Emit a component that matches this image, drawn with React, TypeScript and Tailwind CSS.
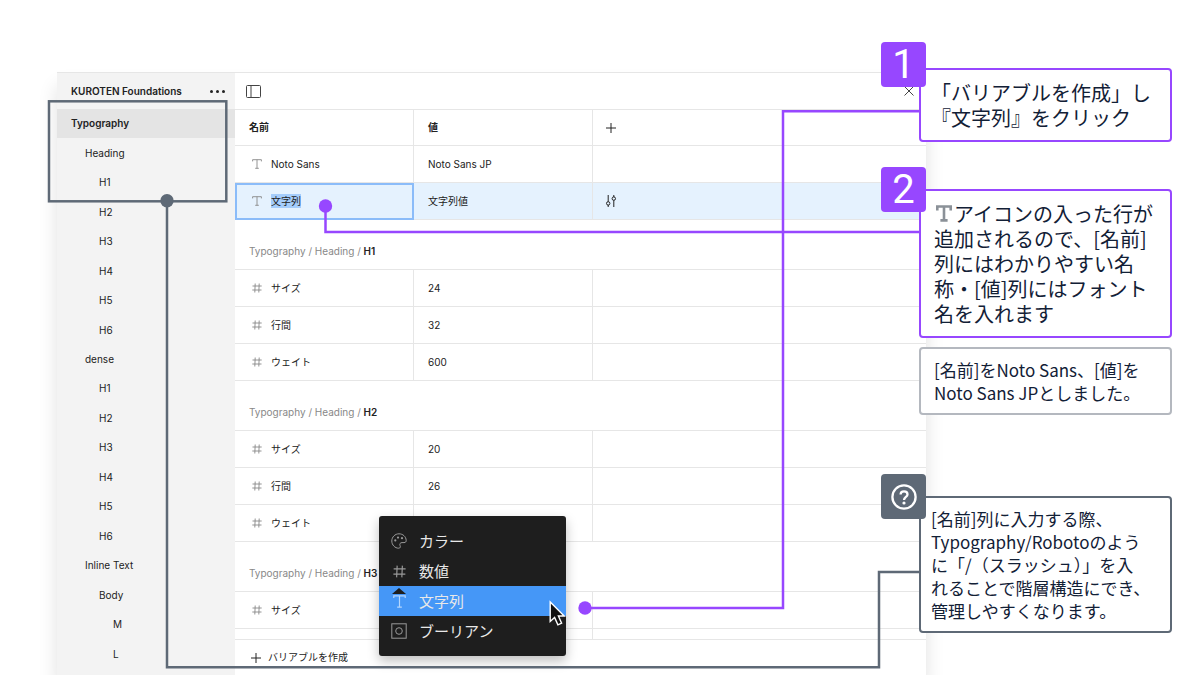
import type { ReactNode } from 'react';

type IconProps = { className?: string };

const TextIcon = ({ className = 'size-[10px]' }: IconProps) => (
  <svg viewBox="0 0 10 10" fill="none" stroke="currentColor" strokeWidth="0.9" className={className}>
    <path d="M0.6 2.4V0.7H9.4V2.4M5 0.7V9.3M3.2 9.3H6.8" />
  </svg>
);

const HashIcon = ({ className = 'size-[10px]' }: IconProps) => (
  <svg viewBox="0 0 10 10" fill="none" stroke="currentColor" strokeWidth="0.9" className={className}>
    <path d="M3.2 0.5L2.8 9.5M7.2 0.5L6.8 9.5M0.5 3H9.7M0.3 7H9.5" />
  </svg>
);

const PaletteIcon = () => (
  <svg viewBox="0 0 16 16" fill="none" stroke="currentColor" strokeWidth="1" className="size-4">
    <path d="M8 0.8C4 0.8 0.8 4 0.8 8S4 15.2 7.6 15.2C9.6 15.2 9.6 13.6 9 12.4C8.4 11 9.2 9.6 11 9.6H13C14.6 9.6 15.2 8.8 15.2 7.4C15 3.6 11.9 0.8 8 0.8Z" />
    <g fill="currentColor" stroke="none">
      <circle cx="4.3" cy="7.4" r="1.1" />
      <circle cx="7" cy="4.6" r="1.1" />
      <circle cx="11" cy="5.2" r="1.1" />
    </g>
  </svg>
);

const BooleanIcon = () => (
  <svg viewBox="0 0 16 16" fill="none" stroke="currentColor" strokeWidth="1" className="size-4">
    <rect x="0.8" y="0.8" width="14.4" height="14.4" />
    <circle cx="8" cy="8" r="3.3" />
  </svg>
);

const PlusIcon = ({ className = 'size-[10px]' }: IconProps) => (
  <svg viewBox="0 0 10 10" fill="none" stroke="currentColor" strokeWidth="1" className={className}>
    <path d="M5 0V10M0 5H10" />
  </svg>
);

const SlidersIcon = () => (
  <svg viewBox="0 0 12 12" fill="none" stroke="currentColor" strokeWidth="1" className="size-3">
    <path d="M3.2 0V6.7M3.2 10V12M8.8 0V2M8.8 5.3V12" />
    <circle cx="3.2" cy="8.4" r="1.7" />
    <circle cx="8.8" cy="3.6" r="1.7" />
  </svg>
);

const navItems = [
  { label: 'Typography', level: 0 },
  { label: 'Heading', level: 1 },
  { label: 'H1', level: 2 },
  { label: 'H2', level: 2 },
  { label: 'H3', level: 2 },
  { label: 'H4', level: 2 },
  { label: 'H5', level: 2 },
  { label: 'H6', level: 2 },
  { label: 'dense', level: 1 },
  { label: 'H1', level: 2 },
  { label: 'H2', level: 2 },
  { label: 'H3', level: 2 },
  { label: 'H4', level: 2 },
  { label: 'H5', level: 2 },
  { label: 'H6', level: 2 },
  { label: 'Inline Text', level: 1 },
  { label: 'Body', level: 2 },
  { label: 'M', level: 3 },
  { label: 'L', level: 3 },
];

const levelStyles = [
  'pl-[14px] bg-[#e4e4e4] font-semibold',
  'pl-[28px]',
  'pl-[42px]',
  'pl-[56px]',
];

const groups = [
  { name: 'H1', rows: [['サイズ', '24'], ['行間', '32'], ['ウェイト', '600']] },
  { name: 'H2', rows: [['サイズ', '20'], ['行間', '26'], ['ウェイト', '']] },
  { name: 'H3', rows: [['サイズ', ''], ['', '']] },
];

const menuItems = [
  { label: 'カラー', icon: <PaletteIcon /> },
  { label: '数値', icon: <HashIcon className="size-[13px]" /> },
  { label: '文字列', icon: <TextIcon className="size-[13px]" />, active: true },
  { label: 'ブーリアン', icon: <BooleanIcon /> },
];

function Sidebar() {
  return (
    <nav className="flex w-[178px] shrink-0 flex-col bg-[#f3f3f3] pb-[6px]">
      <div className="flex h-[36px] shrink-0 items-center justify-between pl-[14px] pr-[10px]">
        <h1 className="font-semibold">KUROTEN Foundations</h1>
        <button type="button" aria-label="More" className="flex gap-[3px]">
          <span className="size-[3px] rounded-full bg-[#222]" />
          <span className="size-[3px] rounded-full bg-[#222]" />
          <span className="size-[3px] rounded-full bg-[#222]" />
        </button>
      </div>
      <ul className="flex flex-1 flex-col">
        {navItems.map((item, i) => (
          <li key={i} className="flex flex-1">
            <a href="#" className={`flex flex-1 items-center ${levelStyles[item.level]}`}>
              {item.label}
            </a>
          </li>
        ))}
      </ul>
    </nav>
  );
}

function Row({ icon, name, value, action, selected }: {
  icon: ReactNode;
  name: ReactNode;
  value: string;
  action?: ReactNode;
  selected?: boolean;
}) {
  return (
    <tr className={selected ? 'bg-[#e5f2fe]' : ''}>
      <td className={`h-[37px] border-b border-r border-[#e6e6e6] pl-[17px] ${selected ? 'outline-2 -outline-offset-2 outline-[#8bbcf9]' : ''}`}>
        <div className="flex items-center gap-[9px]">
          <span className="text-[#888]">{icon}</span>
          {name}
        </div>
      </td>
      <td className="border-b border-r border-[#e6e6e6] pl-[14px]">{value}</td>
      <td className="border-b border-[#e6e6e6] pl-3">{action}</td>
    </tr>
  );
}

function VariablesTable() {
  return (
    <table className="w-full table-fixed border-separate border-spacing-0 text-left">
      <colgroup>
        <col className="w-[179px]" />
        <col className="w-[179px]" />
        <col />
      </colgroup>
      <thead>
        <tr>
          <th className="h-[36px] border-b border-r border-[#e6e6e6] pl-[14px] font-bold">名前</th>
          <th className="border-b border-r border-[#e6e6e6] pl-[14px] font-bold">値</th>
          <th className="border-b border-[#e6e6e6] pl-[13px]">
            <button type="button" aria-label="Add mode" className="block">
              <PlusIcon />
            </button>
          </th>
        </tr>
      </thead>
      <tbody>
        <Row icon={<TextIcon />} name="Noto Sans" value="Noto Sans JP" />
        <Row
          selected
          icon={<TextIcon />}
          name={<input aria-label="名前" defaultValue="文字列" className="h-[14px] w-[30px] bg-[#a5cdfb]" />}
          value="文字列値"
          action={
            <button type="button" aria-label="Edit" className="block">
              <SlidersIcon />
            </button>
          }
        />
      </tbody>
      {groups.map((group) => (
        <tbody key={group.name}>
          <tr>
            <th colSpan={3} className="h-[50px] border-b border-[#e6e6e6] pb-[10px] pl-[14px] align-bottom font-normal text-[#888]">
              Typography / Heading / <span className="font-semibold text-[#222]">{group.name}</span>
            </th>
          </tr>
          {group.rows.map(([name, value]) => (
            <Row key={name} icon={<HashIcon />} name={name} value={value} />
          ))}
        </tbody>
      ))}
    </table>
  );
}

function TypeMenu() {
  return (
    <div
      role="menu"
      className="absolute left-[322px] top-[443px] w-[187px] rounded-[3px] bg-[#1e1e1e] py-[10px] text-[15px] text-[#e8e8e8] shadow-[0_5px_12px_rgba(0,0,0,0.25)]"
    >
      {menuItems.map((item) => (
        <button
          key={item.label}
          type="button"
          role="menuitem"
          className={`relative flex h-[30px] w-full items-center gap-3 pl-3 ${item.active ? 'bg-[#4597f7]' : ''}`}
        >
          {item.active && (
            <svg viewBox="0 0 14 6" className="absolute left-[13px] top-[2px] h-[6px] w-[14px]">
              <path d="M7 0L14 6H0Z" fill="#1e1e1e" />
            </svg>
          )}
          <span className={`flex w-4 justify-center ${item.active ? 'text-[#b5d6fd]' : 'text-[#999]'}`}>{item.icon}</span>
          {item.label}
        </button>
      ))}
      <svg viewBox="0 0 17 26" className="absolute left-[170px] top-[84px] h-[26px] w-[17px]">
        <path d="M1.2 2V21.5L5.6 17.4L8.9 24.8L12.6 23.2L9.4 16H15.2Z" fill="#111" stroke="#fff" strokeWidth="1.4" />
      </svg>
    </div>
  );
}

function VariablesWindow() {
  return (
    <section className="relative ml-[57px] mt-[72px] flex min-w-0 flex-1 border-t border-[#e6e6e6] bg-white text-[10px] leading-[15px] text-[#222] shadow-[0_14px_18px_rgba(0,0,0,0.12)]">
      <Sidebar />
      <div className="flex min-w-0 flex-1 flex-col">
        <header className="flex h-[37px] shrink-0 items-center justify-between border-b border-[#e6e6e6] pl-[11px] pr-3">
          <button type="button" aria-label="Toggle sidebar">
            <svg viewBox="0 0 15 13" fill="none" stroke="#444" className="h-[13px] w-[15px]">
              <rect x="0.5" y="0.5" width="14" height="12" rx="1" />
              <path d="M5 0.5V12.5" />
            </svg>
          </button>
          <button type="button" aria-label="Close">
            <svg viewBox="0 0 10 10" fill="none" stroke="#444" className="size-[10px]">
              <path d="M0.5 0.5L9.5 9.5M9.5 0.5L0.5 9.5" />
            </svg>
          </button>
        </header>
        <div className="h-0 flex-1 overflow-hidden">
          <VariablesTable />
        </div>
        <footer className="flex h-[36px] shrink-0 border-t border-[#e6e6e6] pl-4">
          <button type="button" className="flex items-center gap-[7px]">
            <PlusIcon />
            バリアブルを作成
          </button>
        </footer>
      </div>
      <TypeMenu />
    </section>
  );
}

function Connectors() {
  return (
    <svg className="pointer-events-none absolute left-0 top-0 h-[675px] w-[1200px]" fill="none" strokeWidth="2.5">
      <g stroke="#9747ff">
        <path d="M585 608H783V111.2H921" />
        <path d="M325.5 206V232H921" />
      </g>
      <g fill="#9747ff">
        <circle cx="585" cy="608" r="6.7" />
        <circle cx="325.5" cy="206" r="6.7" />
      </g>
      <g stroke="#5e6976">
        <rect x="49" y="101.3" width="177.3" height="100" />
        <path d="M167 201V667.3H879V572H921" />
      </g>
      <circle cx="167" cy="200.7" r="6.7" fill="#5e6976" />
    </svg>
  );
}

function Callout({ className, badge, children }: { className: string; badge?: ReactNode; children: ReactNode }) {
  return (
    <div className={`relative whitespace-nowrap rounded-[4px] border-2 bg-white ${className}`}>
      {badge}
      <p>{children}</p>
    </div>
  );
}

const badgeStyle = 'absolute -left-10 flex size-[45px] items-center justify-center rounded-[4px] text-white';

export default function App() {
  return (
    <main className="relative flex h-screen min-h-[675px] overflow-hidden bg-white font-['Inter','Noto_Sans_CJK_JP',sans-serif]">
      <VariablesWindow />
      <Connectors />
      <aside className="relative -ml-[7px] mr-7 w-[253px] shrink-0 pt-[68px] font-['Noto_Sans_CJK_JP',sans-serif] text-[#122036]">
        <Callout
          className="border-[#9747ff] px-[10px] py-[10px] text-[20px] leading-[25px]"
          badge={<span className={`${badgeStyle} -top-7 bg-[#9747ff] font-[Roboto,sans-serif] text-[40px]`}>1</span>}
        >
          「バリアブルを作成」し
          <br />
          『文字列』をクリック
        </Callout>
        <Callout
          className="mt-[47px] border-[#9747ff] px-[13px] py-[10px] text-[20px] leading-[25px]"
          badge={<span className={`${badgeStyle} -top-6 bg-[#9747ff] font-[Roboto,sans-serif] text-[40px]`}>2</span>}
        >
          <svg viewBox="0 0 16 17" fill="none" stroke="#8b9198" strokeWidth="2.6" className="mx-[2px] inline-block h-[17px] w-4 align-baseline">
            <path d="M1.3 5.4V1.5H14.7V5.4M8 1.5V15.4M4.4 15.4H11.6" />
          </svg>
          アイコンの入った行が
          <br />
          追加されるので、[名前]
          <br />
          列にはわかりやすい名
          <br />
          称・[値]列にはフォント
          <br />
          名を入れます
        </Callout>
        <Callout className="mt-[9px] border-[#b4b8bf] px-[13px] py-[9px] text-[17px] leading-[23px]">
          [名前]をNoto Sans、[値]を
          <br />
          Noto Sans JPとしました。
        </Callout>
        <Callout
          className="mt-[81px] border-[#5e6976] px-[10px] py-[9px] text-[17px] leading-[23px]"
          badge={
            <span className={`${badgeStyle} -top-6 bg-[#5e6976]`}>
              <svg viewBox="0 0 26 26" fill="none" stroke="currentColor" strokeWidth="2.3" className="size-[26px]">
                <circle cx="13" cy="13" r="11.6" />
                <path d="M9.6 10.6C9.6 8.6 11 7.4 13 7.4S16.5 8.7 16.5 10.4C16.5 12.8 13 13 13 16" />
                <circle cx="13" cy="19" r="1.6" fill="currentColor" stroke="none" />
              </svg>
            </span>
          }
        >
          [名前]列に入力する際、
          <br />
          Typography/Robotoのよう
          <br />
          に「/（スラッシュ）」を入
          <br />
          れることで階層構造にでき、
          <br />
          管理しやすくなります。
        </Callout>
      </aside>
    </main>
  );
}
